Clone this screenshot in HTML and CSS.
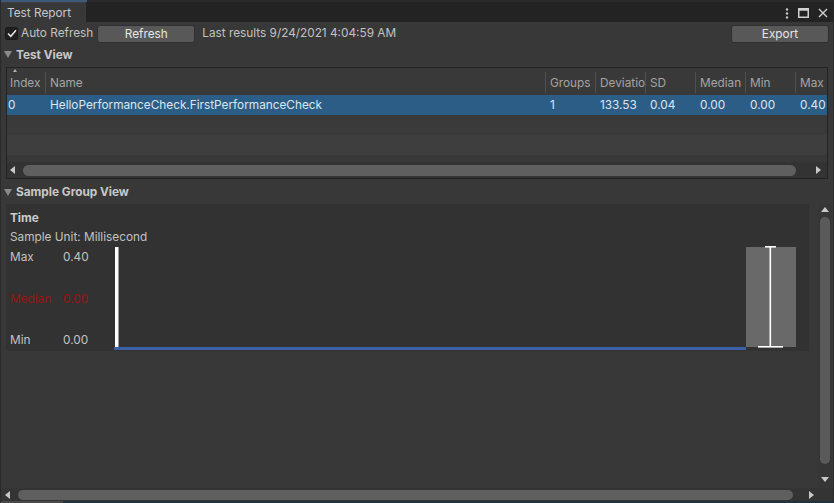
FILE: index.html
```html
<!DOCTYPE html>
<html>
<head>
<meta charset="utf-8">
<link rel="stylesheet" href="styles.css">
</head>
<body>
<div class="window">
  <div class="topline"><div class="topline-active"></div></div>
  <div class="tabbar">
    <div class="tab">Test Report</div>
    <div class="tab-icons">
      <svg width="4" height="11" viewBox="0 0 4 11"><circle cx="2" cy="1.5" r="1.2" fill="#c8c8c8"/><circle cx="2" cy="5.5" r="1.2" fill="#c8c8c8"/><circle cx="2" cy="9.5" r="1.2" fill="#c8c8c8"/></svg>
      <svg width="11" height="10" viewBox="0 0 11 10"><rect x="0.75" y="0.75" width="9.5" height="8.5" fill="none" stroke="#d0d0d0" stroke-width="1.5"/><rect x="0.75" y="0.75" width="9.5" height="2" fill="#d0d0d0"/></svg>
      <svg width="10" height="10" viewBox="0 0 10 10"><path d="M1 1 L9 9 M9 1 L1 9" stroke="#d0d0d0" stroke-width="1.4" fill="none"/></svg>
    </div>
  </div>
  <div class="toolbar">
    <label class="toggle">
      <span class="checkbox"><svg width="10" height="9" viewBox="0 0 10 9"><path d="M1 4.5 L3.8 7.3 L9 1.2" stroke="#e6e6e6" stroke-width="1.5" fill="none"/></svg></span>
      <span>Auto Refresh</span>
    </label>
    <button class="btn btn-refresh">Refresh</button>
    <span class="last">Last results 9/24/2021 4:04:59 AM</span>
    <button class="btn btn-export">Export</button>
  </div>
  <div class="foldout"><span class="fold-arrow"></span>Test View</div>
  <div class="table">
    <div class="thead">
      <div class="th th-first"><span class="sort"></span>Index</div>
      <div class="th">Name</div>
      <div class="th">Groups</div>
      <div class="th">Deviatio</div>
      <div class="th">SD</div>
      <div class="th">Median</div>
      <div class="th">Min</div>
      <div class="th">Max</div>
    </div>
    <div class="tr tr-selected">
      <div class="td td-first">0</div>
      <div class="td">HelloPerformanceCheck.FirstPerformanceCheck</div>
      <div class="td">1</div>
      <div class="td">133.53</div>
      <div class="td">0.04</div>
      <div class="td">0.00</div>
      <div class="td">0.00</div>
      <div class="td">0.40</div>
    </div>
    <div class="tr tr-odd"></div>
    <div class="tr tr-even"></div>
    <div class="hscroll table-hscroll">
      <span class="arrow-left"></span>
      <div class="thumb table-thumb"></div>
      <span class="arrow-right"></span>
    </div>
  </div>
  <div class="foldout foldout-sample"><span class="fold-arrow"></span>Sample Group View</div>
  <div class="content">
    <div class="main">
      <div class="panel">
        <div class="title">Time</div>
        <div class="unit">Sample Unit: Millisecond</div>
        <div class="chart-row">
          <div class="labels">
            <div class="lbl"><span class="lbl-name">Max</span><span>0.40</span></div>
            <div class="lbl lbl-red"><span class="lbl-name">Median</span><span>0.00</span></div>
            <div class="lbl"><span class="lbl-name">Min</span><span>0.00</span></div>
          </div>
          <svg class="chart" width="694" height="103" viewBox="0 0 694 103">
            <rect x="1" y="0" width="3.5" height="102" fill="#ffffff"/>
            <rect x="0" y="100" width="632" height="3" fill="#3b62a6"/>
            <rect x="632" y="0" width="50" height="100" fill="#696969"/>
            <rect x="655.5" y="0" width="1.6" height="100" fill="#ffffff"/>
            <rect x="651" y="-1" width="11" height="1.6" fill="#ffffff"/>
            <rect x="644" y="99" width="25" height="1.6" fill="#ffffff"/>
          </svg>
        </div>
      </div>
    </div>
    <div class="vscroll">
      <span class="arrow-up"></span>
      <div class="vthumb"></div>
      <span class="arrow-down"></span>
    </div>
  </div>
  <div class="hscroll bottom-hscroll">
    <span class="arrow-left"></span>
    <div class="thumb bottom-thumb"></div>
    <span class="arrow-right"></span>
  </div>
  <div class="bottomstrip"><div class="bs-left"></div></div>
</div>
</body>
</html>
```
FILE: styles.css
```css
* { box-sizing: border-box; }
html, body { margin: 0; padding: 0; }
body {
  width: 834px;
  height: 503px;
  overflow: hidden;
  background: #383838;
  font-family: Inter, "Noto Sans", sans-serif;
  font-size: 11.8px;
  color: #c2c2c2;
}
.window {
  width: 834px;
  height: 503px;
  display: flex;
  flex-direction: column;
  border-left: 1px solid #2a2a2a;
  border-right: 1px solid #2a2a2a;
}
.topline {
  height: 2px;
  background: #2a2a2a;
}
.topline-active {
  width: 86px;
  height: 2px;
  background: #3d5a7c;
}
.tabbar {
  height: 20px;
  background: #232323;
  display: flex;
  align-items: stretch;
}
.tab {
  width: 85px;
  background: #383838;
  padding-left: 6px;
  line-height: 20px;
  color: #c8c8c8;
  border-top: 1px solid #3f3f3f;
}
.tab-icons {
  margin-left: auto;
  display: flex;
  align-items: center;
  gap: 9px;
  padding-right: 5px;
  padding-top: 2px;
}
.toolbar {
  height: 22px;
  display: flex;
  align-items: center;
  padding-left: 4px;
  padding-right: 4px;
}
.toggle {
  display: flex;
  align-items: center;
  gap: 3px;
}
.checkbox {
  width: 13px;
  height: 13px;
  background: #202020;
  border: 1px solid #1a1a1a;
  border-radius: 2px;
  display: flex;
  align-items: center;
  justify-content: center;
}
.btn {
  height: 18px;
  width: 98px;
  background: #585858;
  border: 1px solid #303030;
  border-radius: 3px;
  color: #e6e6e6;
  font-family: Inter, "Noto Sans", sans-serif;
  font-size: 11.8px;
  padding: 0;
  margin-top: 2px;
}
.btn-refresh { margin-left: 4px; }
.last { margin-left: 7px; }
.btn-export { margin-left: auto; }
.foldout {
  height: 20px;
  display: flex;
  align-items: center;
  font-weight: 700;
  color: #c8c8c8;
  padding-left: 2px;
  padding-top: 1px;
}
.fold-arrow {
  width: 0;
  height: 0;
  border-left: 4px solid transparent;
  border-right: 4px solid transparent;
  border-top: 7px solid #8a8a8a;
  margin-right: 4px;
  margin-left: 1px;
}
.table {
  margin: 3px 5px 0 5px;
  height: 112px;
  border: 1px solid #232323;
  background: #383838;
  display: flex;
  flex-direction: column;
  overflow: hidden;
}
.thead, .tr {
  display: grid;
  grid-template-columns: 38px 500px 50px 50px 50px 50px 50px 50px;
  flex-shrink: 0;
}
.thead {
  height: 27px;
  background: #393939;
  align-items: end;
}
.th {
  position: relative;
  height: 21px;
  margin-bottom: 2px;
  border-left: 1px solid #505050;
  padding-left: 4px;
  line-height: 22px;
  color: #a4a4a4;
  white-space: nowrap;
  overflow: hidden;
}
.th-first {
  border-left: none;
  padding-left: 3px;
  overflow: visible;
}
.sort {
  position: absolute;
  left: 6px;
  top: -3px;
  width: 0;
  height: 0;
  border-left: 2px solid transparent;
  border-right: 2px solid transparent;
  border-bottom: 3px solid #b0b0b0;
}
.tr { height: 20px; }
.td {
  line-height: 20px;
  padding-left: 5px;
  white-space: nowrap;
  overflow: hidden;
}
.td-first { padding-left: 1px; }
.tr-selected { background: #2c5d87; color: #dde5ee; }
.tr-odd { background: #3a3a3a; }
.tr-even { background: #3e3e3e; }
.hscroll {
  display: flex;
  align-items: center;
  flex-shrink: 0;
}
.table-hscroll {
  margin-top: auto;
  height: 16px;
  background: #333333;
  padding: 0 6px 0 3px;
}
.arrow-left {
  width: 0;
  height: 0;
  border-top: 4px solid transparent;
  border-bottom: 4px solid transparent;
  border-right: 5px solid #c8c8c8;
}
.arrow-right {
  width: 0;
  height: 0;
  border-top: 4px solid transparent;
  border-bottom: 4px solid transparent;
  border-left: 5px solid #c8c8c8;
}
.thumb {
  height: 11px;
  background: #5f5f5f;
  border-radius: 6px;
}
.table-thumb { margin-left: 8px; width: 773px; margin-right: auto; }
.foldout-sample { margin-top: 3px; height: 19px; }
.content {
  flex: 1;
  display: flex;
  min-height: 0;
}
.main { flex: 1; }
.panel {
  margin: 3px 9px 0 5px;
  height: 147px;
  background: #323232;
  padding: 4px 0 0 4px;
}
.title {
  font-weight: 700;
  line-height: 20px;
  color: #cccccc;
}
.unit { line-height: 19px; }
.chart-row {
  display: flex;
  height: 103px;
}
.labels {
  width: 104px;
  display: flex;
  flex-direction: column;
  justify-content: space-between;
}
.lbl {
  display: flex;
  line-height: 20px;
}
.lbl-name { width: 53px; }
.lbl-red { color: #9a1414; }
.chart { display: block; overflow: visible; }
.vscroll {
  width: 14px;
  margin-right: 1px;
  margin-top: 3px;
  background: #363636;
  display: flex;
  flex-direction: column;
  align-items: center;
  padding: 3px 0 6px;
}
.arrow-up {
  width: 0;
  height: 0;
  border-left: 4px solid transparent;
  border-right: 4px solid transparent;
  border-bottom: 5px solid #c8c8c8;
}
.vthumb {
  width: 10px;
  height: 247px;
  margin-top: 5px;
  background: #5a5a5a;
  border-radius: 5px;
}
.arrow-down {
  margin-top: auto;
  width: 0;
  height: 0;
  border-left: 4px solid transparent;
  border-right: 4px solid transparent;
  border-top: 5px solid #c8c8c8;
}
.bottom-hscroll {
  height: 13px;
  background: #343434;
  padding: 0 19px 0 4px;
}
.bottom-thumb { margin-left: 8px; width: 775px; height: 10px; margin-right: auto; }
.bottomstrip {
  height: 2px;
  background: #1e3440;
}
.bs-left { width: 62px; height: 2px; background: #4a4a4a; }
```
